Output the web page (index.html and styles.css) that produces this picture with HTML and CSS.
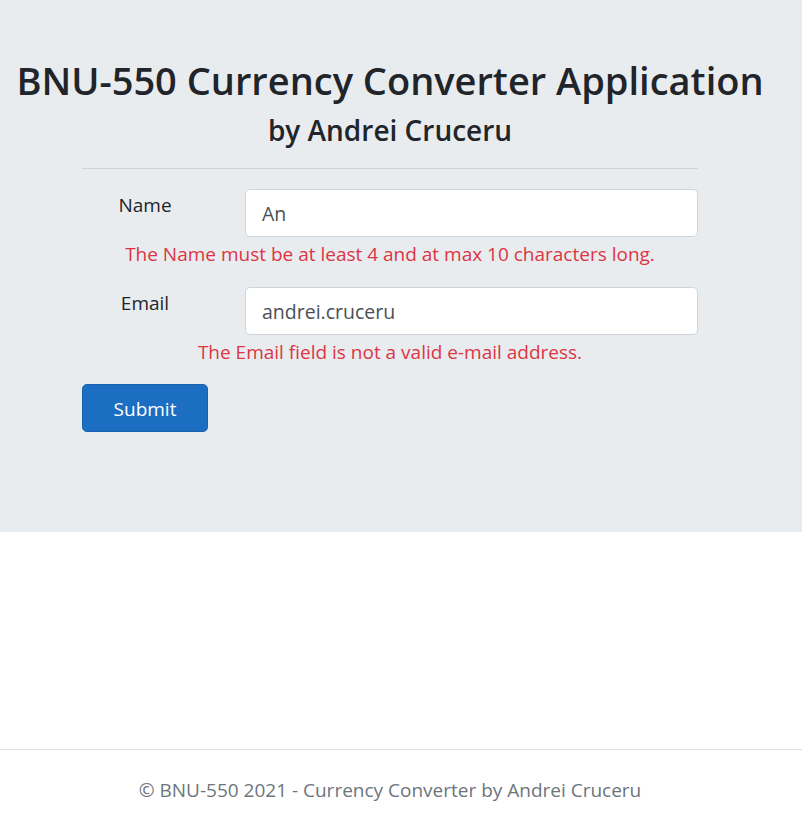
FILE: index.html
```html
<!DOCTYPE html>
<html lang="en">
<head>
<meta charset="utf-8">
<title>BNU-550 Currency Converter</title>
<link rel="stylesheet" href="styles.css">
</head>
<body>
<div class="jumbotron">
  <div class="container">
    <h1 class="title">BNU-550 Currency Converter Application</h1>
    <h3 class="subtitle">by Andrei Cruceru</h3>
    <hr class="divider">
    <form class="form">
      <div class="field">
        <label class="label" for="name">Name</label>
        <input class="input" id="name" type="text" value="An">
      </div>
      <div class="error">The Name must be at least 4 and at max 10 characters long.</div>
      <div class="field field-second">
        <label class="label" for="email">Email</label>
        <input class="input" id="email" type="text" value="andrei.cruceru">
      </div>
      <div class="error">The Email field is not a valid e-mail address.</div>
      <button class="submit" type="button">Submit</button>
    </form>
  </div>
</div>
<div class="spacer"></div>
<footer class="footer">
  <div class="footer-text">&copy; BNU-550 2021 - Currency Converter by Andrei Cruceru</div>
</footer>
</body>
</html>
```

FILE: styles.css
```css
html, body {
  margin: 0;
  padding: 0;
  background: #fff;
  font-family: "Open Sans", "Noto Sans", sans-serif;
  color: #212529;
}

.jumbotron {
  background: #e9ecef;
  padding: 56px 0 100px 0;
}

.container {
  width: 616px;
  margin-left: 82px;
}

.title {
  margin: 0 -120px 8px -120px;
  font-size: 38px;
  line-height: 48px;
  font-weight: 600;
  text-align: center;
  white-space: nowrap;
}

.subtitle {
  margin: 0;
  font-size: 28px;
  line-height: 36px;
  font-weight: 600;
  text-align: center;
}

.divider {
  margin: 20px 0 20px 0;
  border: 0;
  border-top: 1px solid rgba(0, 0, 0, 0.1);
  height: 0;
}

.form {
  display: flex;
  flex-direction: column;
}

.field {
  display: grid;
  grid-template-columns: 126px 453px;
  column-gap: 37px;
  align-items: start;
}

.field-second {
  margin-top: 20px;
}

.label {
  font-size: 19px;
  line-height: 30px;
  padding-top: 1px;
  text-align: center;
  color: #212529;
}

.input {
  box-sizing: border-box;
  height: 48px;
  width: 100%;
  padding: 8px 16px;
  font-family: inherit;
  font-size: 19.5px;
  line-height: 30px;
  color: #495057;
  background: #fff;
  border: 1px solid #ced4da;
  border-radius: 4.8px;
  margin: 0;
}

.error {
  font-size: 19px;
  line-height: 30px;
  padding-top: 2px;
  margin-bottom: -2px;
  color: #dc3545;
  text-align: center;
}

.submit {
  align-self: flex-start;
  margin-top: 19px;
  width: 126px;
  height: 48px;
  box-sizing: border-box;
  background: #1b6ec2;
  border: 1px solid #1861ac;
  border-radius: 4.8px;
  color: #fff;
  font-family: inherit;
  font-size: 19px;
  line-height: 30px;
  padding: 1px 0 0 0;
}

.spacer {
  height: 217px;
}

.footer {
  border-top: 1px solid #dee2e6;
  padding-top: 25px;
  height: 46px;
}

.footer-text {
  width: 616px;
  margin-left: 82px;
  text-align: center;
  font-size: 19px;
  line-height: 30px;
  color: #6c757d;
  white-space: nowrap;
}
```
